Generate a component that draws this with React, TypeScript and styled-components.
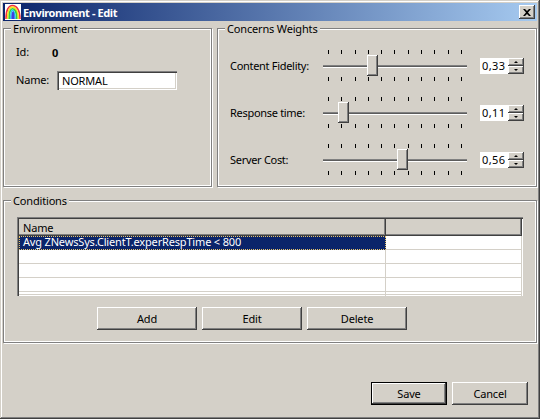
import React from 'react';
import styled, { createGlobalStyle } from 'styled-components';

const GlobalStyle = createGlobalStyle`
  html, body {
    margin: 0;
    padding: 0;
    background: #d4d0c8;
  }
  body {
    font-family: "Noto Sans", "DejaVu Sans", sans-serif;
    font-size: 11px;
    letter-spacing: -0.17px;
    color: #000;
  }
`;

const raised = `
  box-shadow: inset -1px -1px #404040, inset 1px 1px #fff, inset -2px -2px #808080, inset 2px 2px #d4d0c8;
`;

const Window = styled.div`
  box-sizing: border-box;
  width: 540px;
  height: 419px;
  padding: 3px;
  background: #d4d0c8;
  display: flex;
  flex-direction: column;
  box-shadow: inset -1px -1px #404040, inset 1px 1px #d4d0c8, inset -2px -2px #808080, inset 2px 2px #fff;
`;

const TitleBar = styled.div`
  height: 18px;
  flex-shrink: 0;
  display: flex;
  align-items: center;
  padding: 0 2px;
  gap: 2px;
  background: linear-gradient(90deg, #0a246a, #a6caf0);
  color: #fff;
  font-weight: bold;
  letter-spacing: -0.4px;
`;

const Logo = styled.svg`
  width: 16px;
  height: 16px;
  flex-shrink: 0;
`;

const CloseButton = styled.div`
  margin-left: auto;
  width: 16px;
  height: 14px;
  background: #d4d0c8;
  display: flex;
  align-items: center;
  justify-content: center;
  ${raised}
`;

const Body = styled.div`
  display: flex;
  flex-direction: column;
  padding-top: 7px;
  gap: 13px;
`;

const TopRow = styled.div`
  display: flex;
  gap: 5px;
  height: 159px;
`;

const Panel = styled.div<{ $width?: number; $height?: number }>`
  box-sizing: border-box;
  position: relative;
  width: ${({ $width }) => ($width ? `${$width}px` : '100%')};
  height: ${({ $height }) => ($height ? `${$height}px` : '100%')};
  border: 1px solid #808080;
  outline: 1px solid #fff;
  outline-offset: -2px;
  box-shadow: 1px 1px #fff;
`;

const WidePanel = styled(Panel)`
  flex: 1;
  min-width: 0;
`;

const Legend = styled.span`
  position: absolute;
  top: -7px;
  left: 7px;
  padding: 0 2px;
  background: #d4d0c8;
  line-height: 14px;
`;

const EnvFields = styled.div`
  display: grid;
  grid-template-columns: 36px auto;
  justify-content: start;
  align-items: center;
  padding: 13px 0 0 12px;
  row-gap: 8px;
`;

const FieldValue = styled.b`
  padding-left: 0;
`;

const FieldLabel = styled.span`
  line-height: 20px;
`;

const NameInput = styled.div`
  box-sizing: border-box;
  width: 120px;
  height: 19px;
  margin-left: 5px;
  background: #fff;
  padding: 0 5px;
  line-height: 19px;
  box-shadow: inset 1px 1px #808080, inset 2px 2px #404040, inset -1px -1px #fff, inset -2px -2px #d4d0c8;
`;

const WeightList = styled.div`
  display: flex;
  flex-direction: column;
  gap: 16px;
  padding: 21px 0 0 12px;
`;

const WeightRow = styled.div`
  display: flex;
  align-items: center;
  height: 31px;
`;

const WeightLabel = styled.span`
  width: 93px;
  flex-shrink: 0;
  letter-spacing: -0.3px;
`;

const Slider = styled.div`
  width: 144px;
  flex-shrink: 0;
  display: flex;
  flex-direction: column;
  gap: 1px;
`;

const Ticks = styled.div`
  display: flex;
  justify-content: space-between;
  padding: 0 5px;
  height: 4px;
`;

const Tick = styled.i`
  width: 1px;
  height: 4px;
  background: #000;
`;

const Track = styled.div`
  position: relative;
  height: 21px;
  display: flex;
  align-items: center;
  &::before {
    content: '';
    width: 100%;
    height: 3px;
    margin-top: 1px;
    background: #5c5c5c;
    border-top: 1px solid #808080;
    border-bottom: 1px solid #fff;
    box-sizing: border-box;
  }
`;

const Thumb = styled.div`
  position: absolute;
  top: 0;
  width: 11px;
  height: 21px;
  background: #d4d0c8;
  ${raised}
`;

const Spinner = styled.div`
  display: flex;
  margin-left: 13px;
  height: 16px;
`;

const SpinnerValue = styled.div`
  width: 28px;
  background: #fff;
  line-height: 16px;
  padding-left: 2px;
  letter-spacing: 0.4px;
  box-sizing: border-box;
`;

const SpinnerButtons = styled.div`
  display: flex;
  flex-direction: column;
  width: 16px;
`;

const SpinnerButton = styled.div<{ $down?: boolean }>`
  flex: 1;
  position: relative;
  background: #d4d0c8;
  ${raised}
  &::after {
    content: '';
    position: absolute;
    left: 6px;
    top: 3px;
    border-left: 2px solid transparent;
    border-right: 2px solid transparent;
    ${({ $down }) => ($down ? 'border-top: 2px solid #000;' : 'border-bottom: 2px solid #000;')}
  }
`;

const Conditions = styled.div`
  display: flex;
  flex-direction: column;
  padding: 16px 13px 0;
  gap: 11px;
`;

const Table = styled.div`
  box-sizing: border-box;
  width: 506px;
  height: 79px;
  padding: 2px 1px 1px 2px;
  overflow: hidden;
  background: #fff;
  box-shadow: inset 1px 1px #808080, inset 2px 2px #404040, inset -1px -1px #fff, inset -2px -2px #d4d0c8;
`;

const TableRow = styled.div`
  display: grid;
  grid-template-columns: 367px 1fr;
`;

const HeaderCell = styled.div`
  box-sizing: border-box;
  height: 17px;
  padding-left: 4px;
  line-height: 18px;
  background: #d4d0c8;
  box-shadow: inset -1px -1px #404040, inset -2px -2px #808080;
`;

const Cell = styled.div<{ $selected?: boolean }>`
  box-sizing: border-box;
  height: 14px;
  padding-left: 4px;
  line-height: 12px;
  white-space: nowrap;
  border-bottom: 1px solid #d4d0c8;
  border-right: 1px solid #d4d0c8;
  ${({ $selected }) =>
    $selected &&
    `
    background: #0a246a;
    color: #fff;
    border: 0;
    outline: 1px dotted #e8c468;
    outline-offset: -1px;
  `}
`;

const ButtonRow = styled.div`
  display: flex;
  gap: 5px;
  padding-left: 80px;
`;

const Button = styled.div<{ $width: number; $default?: boolean }>`
  box-sizing: border-box;
  width: ${({ $width }) => $width}px;
  height: 23px;
  padding-bottom: 1px;
  display: flex;
  align-items: center;
  justify-content: center;
  background: #d4d0c8;
  ${({ $default }) =>
    $default
      ? 'box-shadow: inset 0 0 0 1px #000, inset -2px -2px #404040, inset 2px 2px #fff, inset -3px -3px #808080;'
      : raised}
`;

const Footer = styled.div`
  margin-top: auto;
  display: flex;
  justify-content: flex-end;
  gap: 5px;
  padding: 0 9px 11px 0;
`;

const weights = [
  { label: 'Content Fidelity:', value: '0,33', thumb: 44 },
  { label: 'Response time:', value: '0,11', thumb: 15 },
  { label: 'Server Cost:', value: '0,56', thumb: 74 },
];

const ticks = Array.from({ length: 11 }, (_, i) => i);

const App: React.FC = () => (
  <Window>
    <GlobalStyle />
    <TitleBar>
      <Logo viewBox="0 0 16 16">
        <rect width="16" height="16" fill="#fff" />
        <g fill="none" strokeWidth="1.6">
          <path d="M1 15C1 6 3.5 1.5 7.5 1.5S15 6 15 15" stroke="#f03040" />
          <path d="M2.6 15C2.6 7 4.6 3.1 7.5 3.1S13.4 7 13.4 15" stroke="#f8e020" />
          <path d="M4.2 15C4.2 8 5.4 4.7 7.5 4.7S11.8 8 11.8 15" stroke="#30d040" />
          <path d="M5.8 15C5.8 9.5 6.4 6.3 7.5 6.3S10.2 9.5 10.2 15" stroke="#20c8f0" />
          <path d="M7.2 15C7.2 11 7.4 8 8 8s.8 3 .8 7" stroke="#4040e0" />
        </g>
      </Logo>
      Environment - Edit
      <CloseButton>
        <svg width="8" height="7" viewBox="0 0 8 7">
          <path d="M0 0h2l2 2 2-2h2L5 3.5 8 7H6L4 5 2 7H0l3-3.5z" fill="#000" />
        </svg>
      </CloseButton>
    </TitleBar>
    <Body>
      <TopRow>
        <Panel $width={209}>
          <Legend>Environment</Legend>
          <EnvFields>
            <FieldLabel>Id:</FieldLabel>
            <FieldValue>0</FieldValue>
            <FieldLabel>Name:</FieldLabel>
            <NameInput>NORMAL</NameInput>
          </EnvFields>
        </Panel>
        <WidePanel>
          <Legend>Concerns Weights</Legend>
          <WeightList>
            {weights.map((w) => (
              <WeightRow key={w.label}>
                <WeightLabel>{w.label}</WeightLabel>
                <Slider>
                  <Ticks>
                    {ticks.map((t) => (
                      <Tick key={t} />
                    ))}
                  </Ticks>
                  <Track>
                    <Thumb style={{ left: w.thumb }} />
                  </Track>
                  <Ticks>
                    {ticks.map((t) => (
                      <Tick key={t} />
                    ))}
                  </Ticks>
                </Slider>
                <Spinner>
                  <SpinnerValue>{w.value}</SpinnerValue>
                  <SpinnerButtons>
                    <SpinnerButton />
                    <SpinnerButton $down />
                  </SpinnerButtons>
                </Spinner>
              </WeightRow>
            ))}
          </WeightList>
        </WidePanel>
      </TopRow>
      <Panel $height={143}>
        <Legend>Conditions</Legend>
        <Conditions>
          <Table>
            <TableRow>
              <HeaderCell>Name</HeaderCell>
              <HeaderCell />
            </TableRow>
            <TableRow>
              <Cell $selected>Avg ZNewsSys.ClientT.experRespTime &lt; 800</Cell>
              <Cell />
            </TableRow>
            {[0, 1, 2, 3].map((r) => (
              <TableRow key={r}>
                <Cell />
                <Cell />
              </TableRow>
            ))}
          </Table>
          <ButtonRow>
            <Button $width={100}>Add</Button>
            <Button $width={100}>Edit</Button>
            <Button $width={100}>Delete</Button>
          </ButtonRow>
        </Conditions>
      </Panel>
    </Body>
    <Footer>
      <Button $width={76} $default>
        Save
      </Button>
      <Button $width={76}>Cancel</Button>
    </Footer>
  </Window>
);

export default App;
